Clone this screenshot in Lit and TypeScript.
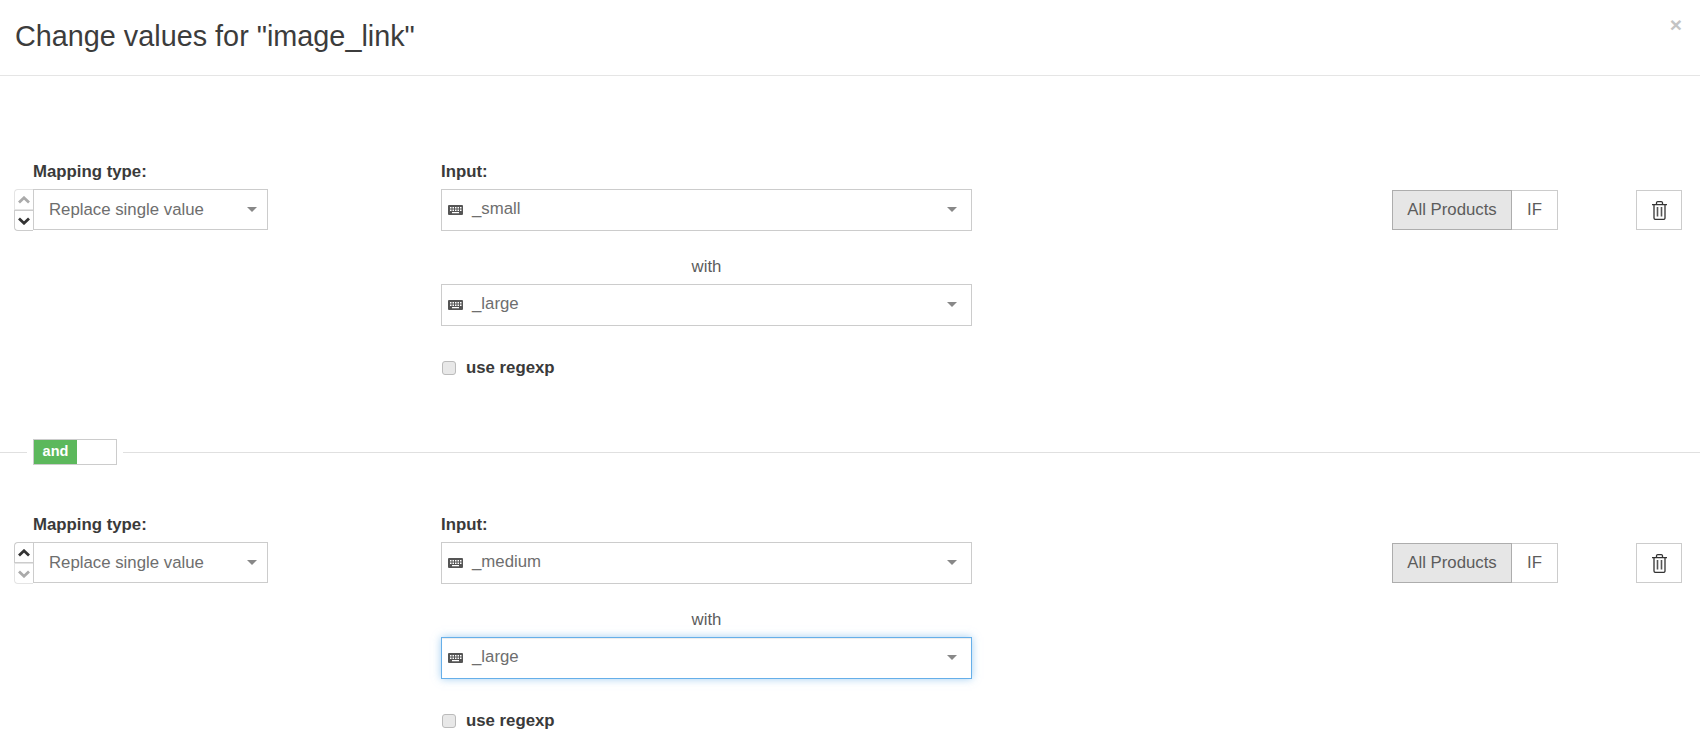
import { LitElement, html, css, svg } from "lit";
import { customElement } from "lit/decorators.js";

const kbd = html`<svg class="kbd" width="15" height="10" viewBox="0 0 15 10"><path fill="#555" fill-rule="evenodd" d="M1 0h13a1 1 0 0 1 1 1v8a1 1 0 0 1-1 1H1a1 1 0 0 1-1-1V1a1 1 0 0 1 1-1zM2 2v1.500h1.500V2zM4.500 2v1.500H6V2zM7 2v1.500h1.500V2zM9.500 2v1.500H11V2zM12 2v1.500h1.500V2zM2 4.500V6h1.500V4.500zM4.500 4.500V6H6V4.500zM7 4.500V6h1.500V4.500zM9.500 4.500V6H11V4.500zM12 4.500V6h1.500V4.500zM4 7v1.300h7V7z"/></svg>`;
const chev = (d: string) => svg`<svg width="12" height="8" viewBox="0 0 12 8"><path d="${d}" fill="none" stroke="currentColor" stroke-width="2.800"/></svg>`;
const UP = "M1 6.500 6 1.800l5 4.700";
const DOWN = "M1 1.500 6 6.200l5-4.700";

@customElement("app-root")
export class AppRoot extends LitElement {
  static styles = css`
    :host { display: block; width: 1700px; height: 750px; overflow: hidden; background: #fff; font-family: "Liberation Sans", Arial, sans-serif; font-size: 16.8px; color: #333; }
    .header { height: 76px; box-sizing: border-box; border-bottom: 1px solid #e5e5e5; display: flex; justify-content: space-between; padding: 15px 15px 0; }
    h4 { margin: 0; font-size: 28.800px; font-weight: 400; line-height: 42px; color: #3c3c3c; }
    .close { font-size: 21px; font-weight: 700; line-height: 21px; color: #c4c4c4; margin-top: -1px; padding-right: 3px; }
    .rule { display: flex; padding-top: 86px; height: 304px; box-sizing: content-box; }
    .rule + .sep + .rule { padding-top: 49px; }
    .col1 { width: 441px; box-sizing: border-box; padding-left: 33px; flex: none; }
    .col2 { width: 531px; flex: none; }
    label.head { display: block; font-weight: 700; line-height: 20px; margin-bottom: 7px; color: #3a3a3a; }
    .stepwrap { display: flex; margin-left: -19px; }
    .stepper { width: 19px; height: 42px; box-sizing: border-box; display: flex; flex-direction: column; }
    .stepper div { flex: 1; display: flex; align-items: center; justify-content: center; border: 1px solid #e4e4e4; border-right: none; color: #333; }
    .stepper .up { border-radius: 4px 0 0 0; }
    .stepper .dn { border-radius: 0 0 0 4px; }
    .stepper .off { color: #aaa; }
    .stepper .on { border-color: #ccc; }
    .sel { position: relative; height: 41px; box-sizing: border-box; border: 1px solid #ccc; background: #fff; display: flex; align-items: center; color: #6e6e6e; padding-left: 15px; }
    .sel::after { content: ""; position: absolute; right: 10px; top: 17px; border: 5px solid transparent; border-top-color: #888; border-bottom: none; }
    .type { width: 235px; }
    .val { width: 531px; height: 42px; padding-left: 6px; padding-bottom: 2px; }
    .val::after { right: 14px; }
    .kbd { margin-right: 9px; flex: none; position: relative; top: 1px; }
    .focus { border-color: #66afe9; box-shadow: 0 0 8px rgba(102,175,233,.6), inset 0 1px 1px rgba(0,0,0,.075); }
    .with { text-align: center; line-height: 20px; color: #5c5c5c; margin: 26px 0 7px; }
    .check { display: flex; align-items: center; margin-top: 32px; font-weight: 700; color: #3a3a3a; line-height: 20px; }
    .box { width: 14px; height: 14px; margin-left: 1px; margin-right: 10px; border: 1px solid #bbb; border-radius: 3px; background: #e8e8e8; box-sizing: border-box; }
    .spacer { flex: 1; }
    .actions { display: flex; margin-top: 28px; height: 40px; padding-right: 18px; flex: none; }
    .btn { height: 40px; box-sizing: border-box; border: 1px solid #ccc; display: flex; align-items: center; justify-content: center; color: #5c5c5c; background: #fff; }
    .all { width: 120px; background: #e6e6e6; border-color: #adadad; }
    .if { width: 46px; border-left: none; }
    .trash { width: 46px; margin-left: 78px; }
    .sep { display: flex; align-items: center; height: 27px; margin-top: -27px; }
    .sep i { height: 1px; background: #e0e0e0; display: block; }
    .sep .l { width: 27px; margin-right: 6px; }
    .sep .r { flex: 1; margin-left: 6px; }
    .toggle { width: 84px; height: 26px; box-sizing: border-box; border: 1px solid #ccc; display: flex; margin-bottom: 2px; }
    .toggle span { width: 43px; background: #5cb85c; color: #fff; font-size: 14.500px; font-weight: 700; text-align: center; line-height: 22px; }
  `;

  private rule(first: string, second: string, upOff: boolean, focus: boolean) {
    return html`<div class="rule">
      <div class="col1">
        <label class="head">Mapping type:</label>
        <div class="stepwrap">
          <div class="stepper">
            <div class="up ${upOff ? "off" : "on"}">${chev(UP)}</div>
            <div class="dn ${upOff ? "on" : "off"}">${chev(DOWN)}</div>
          </div>
          <div class="sel type">Replace single value</div>
        </div>
      </div>
      <div class="col2">
        <label class="head">Input:</label>
        <div class="sel val">${kbd}${first}</div>
        <div class="with">with</div>
        <div class="sel val ${focus ? "focus" : ""}">${kbd}${second}</div>
        <div class="check"><span class="box"></span>use regexp</div>
      </div>
      <div class="spacer"></div>
      <div class="actions">
        <div class="btn all">All Products</div>
        <div class="btn if">IF</div>
        <div class="btn trash">
          <svg width="15" height="19" viewBox="0 0 15 19" fill="none" stroke="#333" stroke-width="1.300"><path d="M0 3.600h15M2 3.600V17a1.400 1.400 0 0 0 1.400 1.400h8.200A1.400 1.400 0 0 0 13 17V3.600M4.500 3.600V1.800A1.200 1.200 0 0 1 5.700.7h3.600a1.200 1.200 0 0 1 1.200 1.100v1.800"/><path d="M5.500 6v9.500M9.500 6v9.500" stroke-width="1.600" stroke="#555"/></svg>
        </div>
      </div>
    </div>`;
  }

  render() {
    return html`
      <div class="header"><h4>Change values for "image_link"</h4><span class="close">×</span></div>
      ${this.rule("_small", "_large", true, false)}
      <div class="sep"><i class="l"></i><div class="toggle"><span>and</span></div><i class="r"></i></div>
      ${this.rule("_medium", "_large", false, true)}
    `;
  }
}
